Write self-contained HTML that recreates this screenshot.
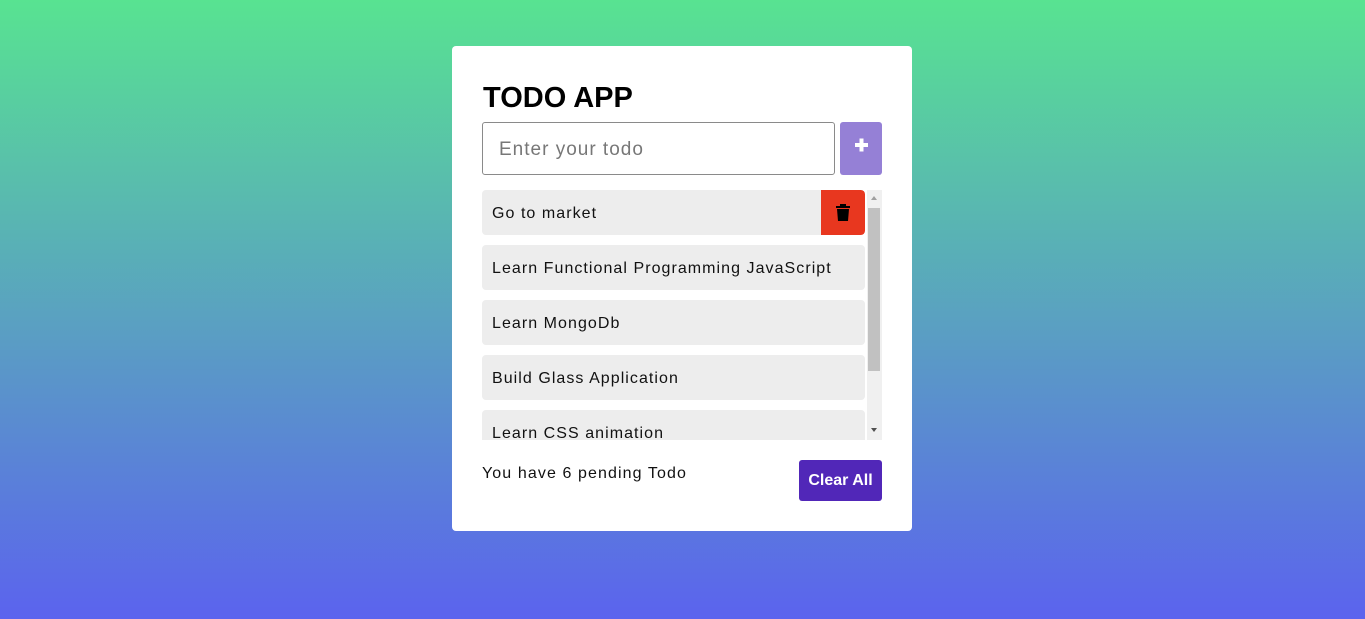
<!DOCTYPE html>
<html><head><style>
*{box-sizing:border-box;margin:0;padding:0}
body{width:1365px;height:619px;overflow:hidden;background:linear-gradient(#58e391,#5b63ee);font-family:"Liberation Sans",sans-serif;position:relative}
.card{position:absolute;left:452px;top:46px;width:460px;height:485px;background:#fff;border-radius:4px}
h1{position:absolute;left:31px;top:36px;font-size:29px;font-weight:bold;color:#000;letter-spacing:0}
.inp{position:absolute;left:30px;top:76px;width:353px;height:53px;border:1px solid #8a8a8a;border-radius:3px;font-size:19px;color:#777;padding:16px 0 0 16px;letter-spacing:1px}
.add{position:absolute;left:388px;top:76px;width:42px;height:53px;background:#9580d6;border-radius:3px}
.add svg{display:block}
.list{position:absolute;left:30px;top:144px;width:400px;height:250px;overflow:hidden}
.item{position:absolute;left:0;width:383px;height:45px;background:#ededed;border-radius:4px;font-size:16px;color:#111;padding:15px 10px 0;overflow:hidden;letter-spacing:1.05px;white-space:nowrap}
.del{position:absolute;right:0;top:0;width:44px;height:45px;background:#e8371f;border-radius:0 4px 4px 0}
.sb{position:absolute;left:385px;top:0;width:15px;height:250px;background:#f0f0f0}
.thumb{position:absolute;left:1px;top:18px;width:12px;height:163px;background:#c1c1c1}
.foot{position:absolute;left:30px;top:419px;font-size:16px;color:#111;letter-spacing:1.1px}
.clr{position:absolute;left:347px;top:414px;width:83px;height:41px;background:#5127b8;border-radius:3px;color:#fff;font-size:16px;font-weight:bold;text-align:center;line-height:41px}
</style></head><body>
<div class="card">
<h1>TODO APP</h1>
<div class="inp">Enter your todo</div>
<div class="add"><svg width="42" height="53"><rect x="15" y="21" width="13" height="4" fill="#fff"/><rect x="19.5" y="16.5" width="4" height="13" fill="#fff"/></svg></div>
<div class="list">
<div class="item" style="top:0">Go to market<div class="del"><svg width="44" height="45" viewBox="0 0 44 45" style="display:block"><rect x="15" y="16" width="14" height="2" fill="#000"/><rect x="19" y="14" width="6" height="2" fill="#000"/><path d="M16 19h12l-1 12h-10z" fill="#000"/></svg></div></div>
<div class="item" style="top:55px">Learn Functional Programming JavaScript</div>
<div class="item" style="top:110px">Learn MongoDb</div>
<div class="item" style="top:165px">Build Glass Application</div>
<div class="item" style="top:220px">Learn CSS animation</div>
<div class="sb"><div class="thumb"></div>
<div style="position:absolute;left:4px;top:6px;border:3.5px solid transparent;border-bottom:4px solid #a0a0a0;border-top:0"></div>
<div style="position:absolute;left:4px;top:238px;border:3.5px solid transparent;border-top:4px solid #505050;border-bottom:0"></div></div>
</div>
<div class="foot">You have 6 pending Todo</div>
<div class="clr">Clear All</div>
</div>
</body></html>
